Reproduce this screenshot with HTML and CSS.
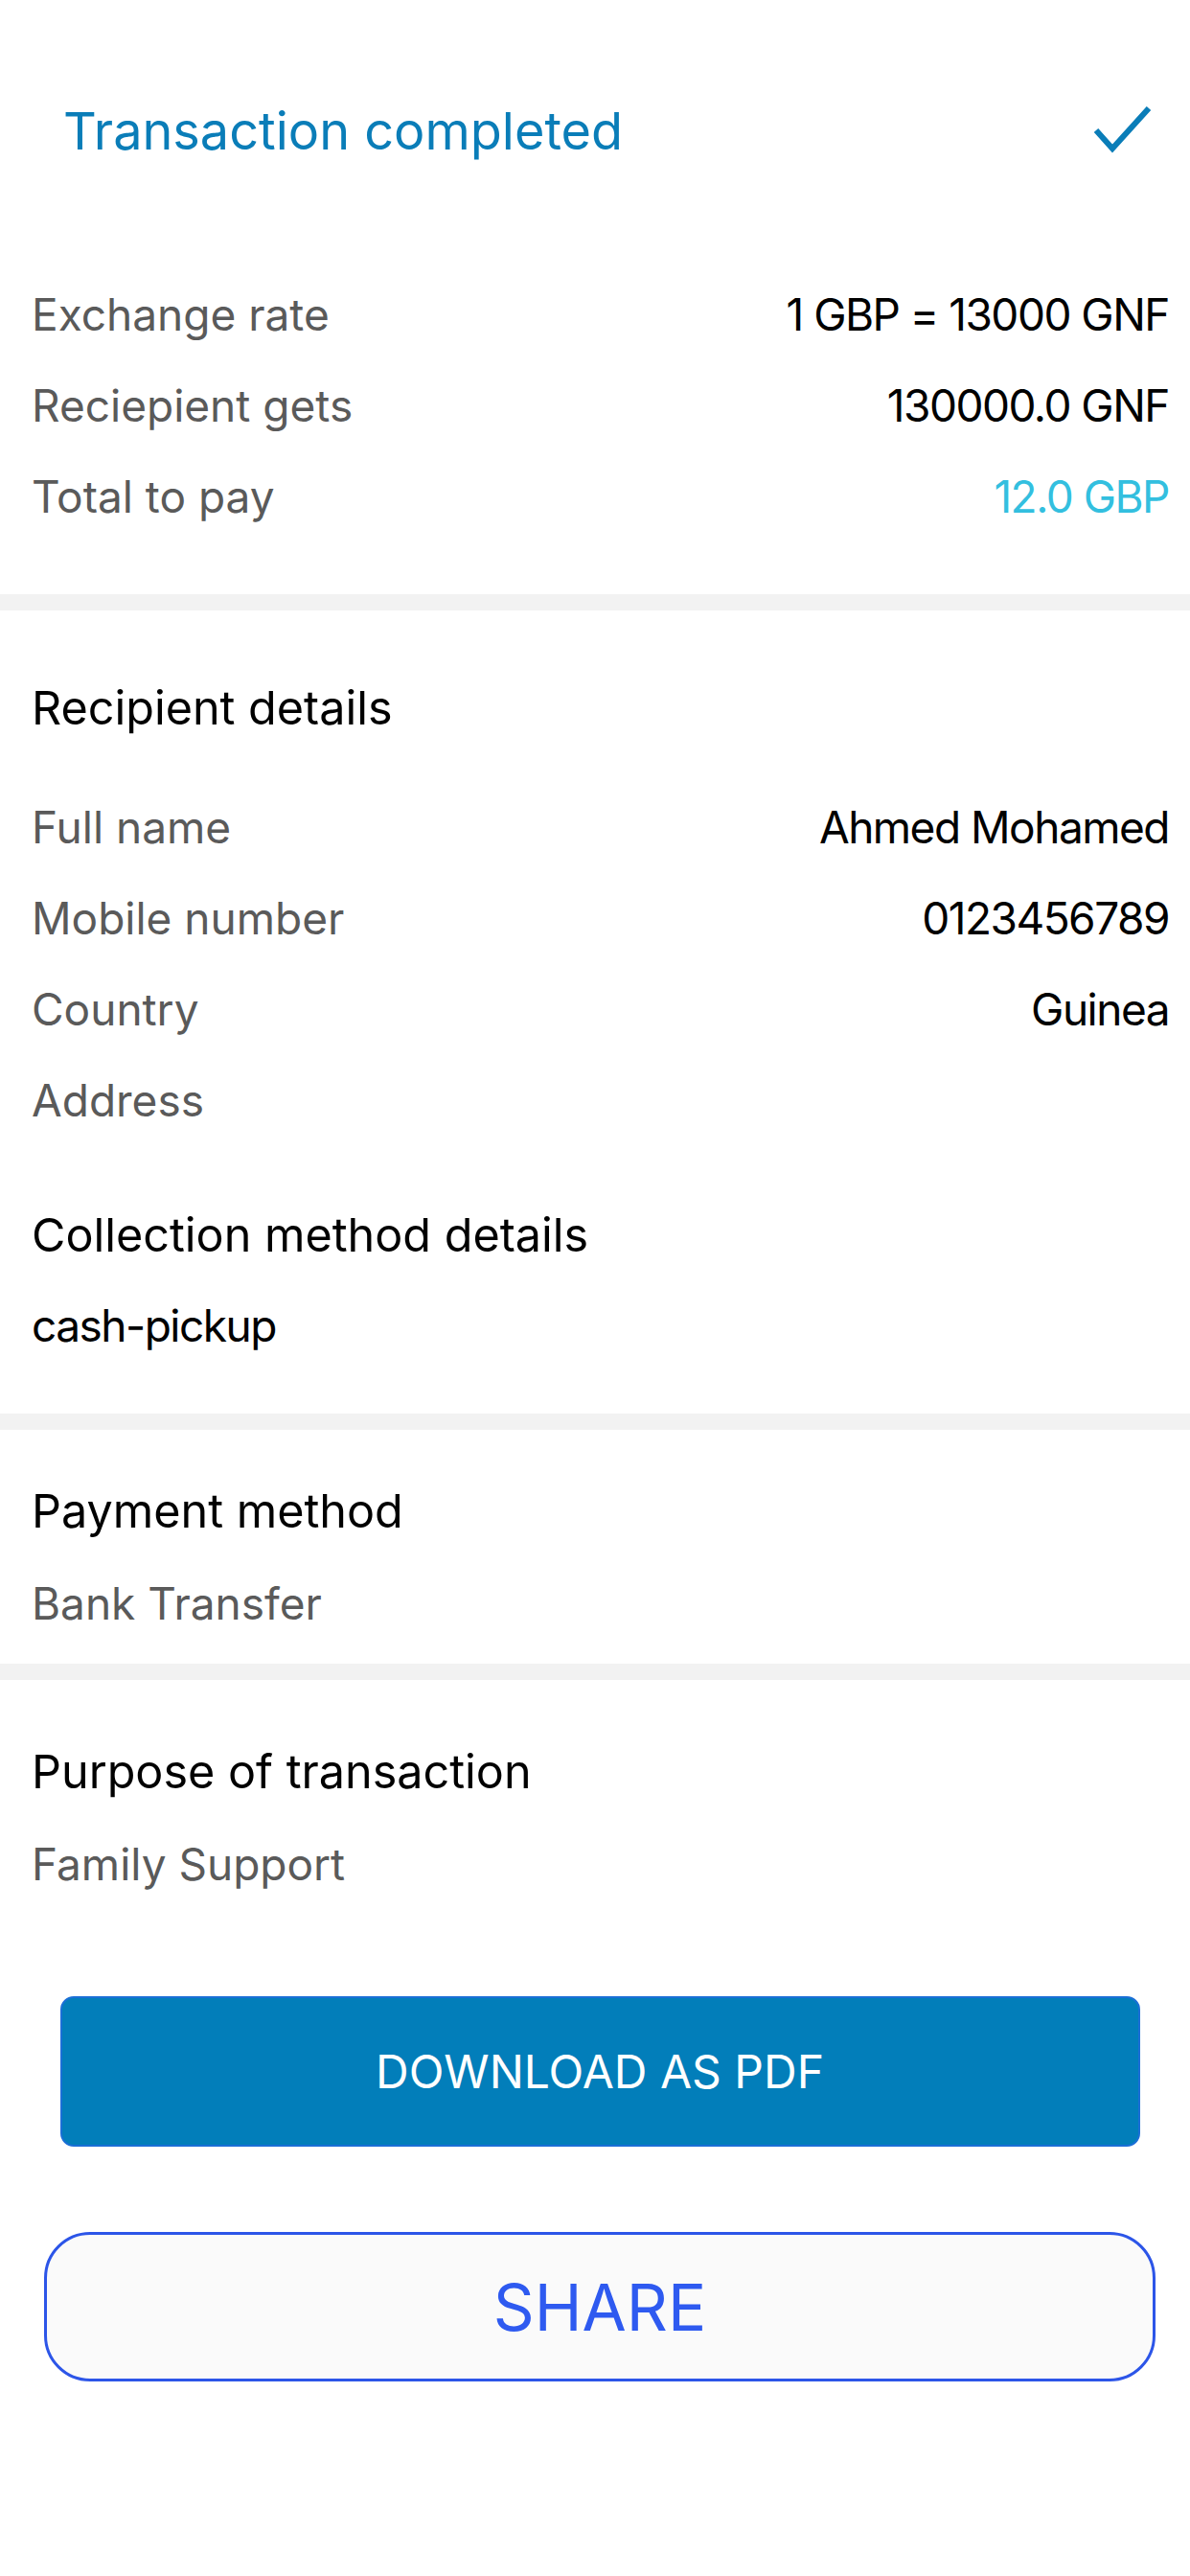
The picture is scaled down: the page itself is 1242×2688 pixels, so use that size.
FILE: index.html
```html
<!DOCTYPE html>
<html lang="en">
<head>
<meta charset="utf-8">
<title>Transaction completed</title>
<link rel="stylesheet" href="styles.css">
</head>
<body>
<div class="screen">
  <header class="header">
    <h1 class="title">Transaction completed</h1>
    <svg class="check" width="64" height="52" viewBox="0 0 64 52" aria-hidden="true">
      <polyline points="4,25 21,44 59,2" fill="none" stroke="#0a7db8" stroke-width="6" stroke-linejoin="miter" stroke-linecap="butt"/>
    </svg>
  </header>

  <section class="block summary">
    <div class="row"><span class="label">Exchange rate</span><span class="value">1 GBP = 13000 GNF</span></div>
    <div class="row"><span class="label">Reciepient gets</span><span class="value">130000.0 GNF</span></div>
    <div class="row"><span class="label">Total to pay</span><span class="value accent">12.0 GBP</span></div>
  </section>

  <div class="divider"></div>

  <section class="block recipient">
    <h2 class="heading first">Recipient details</h2>
    <div class="row"><span class="label">Full name</span><span class="value">Ahmed Mohamed</span></div>
    <div class="row"><span class="label">Mobile number</span><span class="value">0123456789</span></div>
    <div class="row"><span class="label">Country</span><span class="value">Guinea</span></div>
    <div class="row"><span class="label">Address</span><span class="value"></span></div>
    <h2 class="heading collection">Collection method details</h2>
    <div class="row"><span class="value">cash-pickup</span></div>
  </section>

  <div class="divider"></div>

  <section class="block payment">
    <h2 class="heading">Payment method</h2>
    <div class="row"><span class="label">Bank Transfer</span></div>
  </section>

  <div class="divider"></div>

  <section class="block purpose">
    <h2 class="heading">Purpose of transaction</h2>
    <div class="row"><span class="label">Family Support</span></div>
  </section>

  <div class="actions">
    <button class="btn btn-primary" type="button">DOWNLOAD AS PDF</button>
    <button class="btn btn-outline" type="button">SHARE</button>
  </div>
</div>
</body>
</html>
```

FILE: styles.css
```css
* { box-sizing: border-box; }

html, body {
  margin: 0;
  padding: 0;
  background: #ffffff;
}

body {
  font-family: Inter, "Noto Sans", "Liberation Sans", sans-serif;
  color: #000;
  width: 1242px;
  height: 2688px;
  overflow: hidden;
}

.screen {
  display: flex;
  flex-direction: column;
}

.header {
  display: flex;
  align-items: center;
  justify-content: space-between;
  height: 81px;
  margin-top: 96px;
  padding: 0 38px 0 66px;
}

.title {
  margin: 0;
  font-size: 54px;
  font-weight: 400;
  color: #0a7db8;
  line-height: 81px;
}

.check { display: block; }

.block {
  display: flex;
  flex-direction: column;
  padding: 0 22px 0 33px;
}

.summary {
  padding-top: 104px;
  padding-bottom: 54px;
}

.row {
  display: flex;
  justify-content: space-between;
  align-items: center;
  height: 95px;
  line-height: 95px;
  font-size: 46px;
}

.label { color: #5a5a5a; }
.value { color: #000; letter-spacing: -1.5px; }
.accent { color: #33bfdf; }

.divider {
  height: 17px;
  background: #f2f2f2;
}

.heading {
  margin: 0;
  font-size: 48.5px;
  font-weight: 400;
  line-height: 90px;
  color: #000;
}

.recipient { padding-top: 57px; padding-bottom: 44px; }
.recipient .heading.first { margin-bottom: 32px; }
.recipient .heading.collection { margin-top: 48px; margin-bottom: 2px; }

.payment { padding-top: 40px; padding-bottom: 15px; }
.payment .heading,
.purpose .heading { margin-bottom: 4px; }
.purpose { padding-top: 51px; }

.actions {
  display: flex;
  flex-direction: column;
  align-items: center;
  padding-left: 10px;
  margin-top: 90px;
  gap: 89px;
}

.btn {
  font-family: Inter, "Noto Sans", "Liberation Sans", sans-serif;
  cursor: pointer;
  display: flex;
  align-items: center;
  justify-content: center;
}

.btn-primary {
  width: 1127px;
  height: 157px;
  background: #027eba;
  border: 2px solid #1a6fd6;
  border-radius: 14px;
  color: #ffffff;
  font-size: 48px;
  font-weight: 400;
}

.btn-outline {
  width: 1160px;
  height: 156px;
  background: #fafafa;
  border: 3px solid #2c55e8;
  border-radius: 48px;
  color: #2e5af0;
  font-size: 67px;
  font-weight: 400;
}
```
